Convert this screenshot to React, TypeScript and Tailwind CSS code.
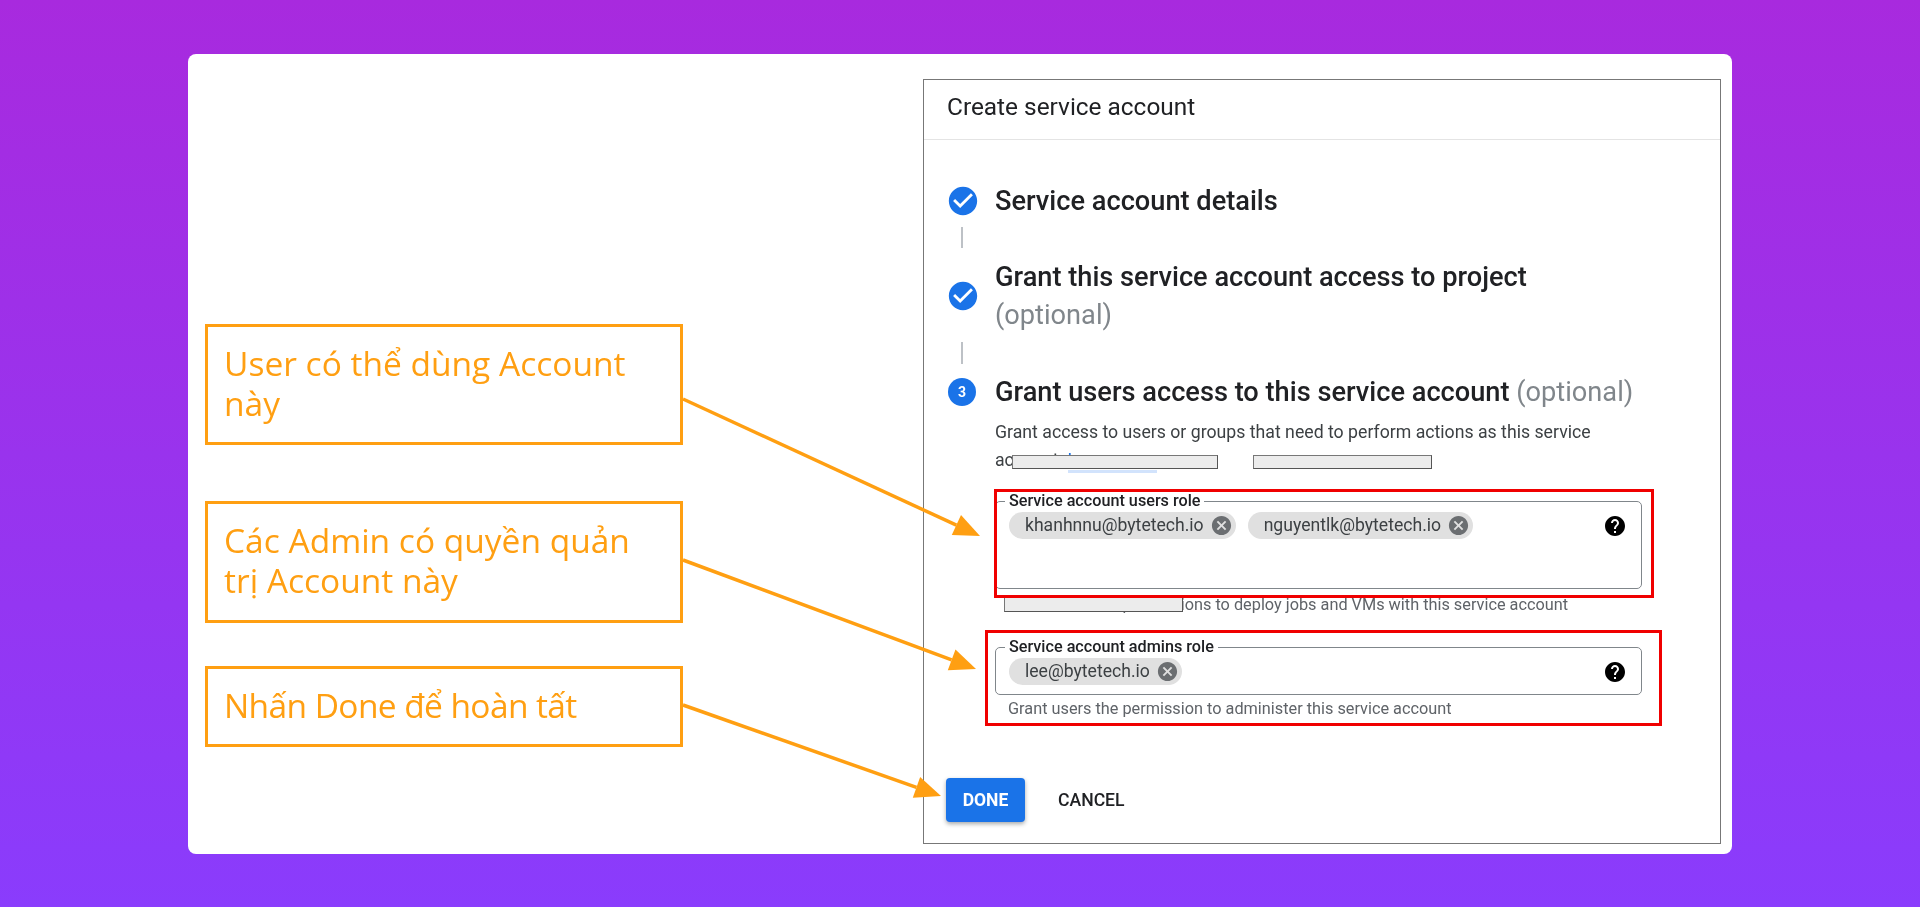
const MD_CHECK = "M12 2C6.48 2 2 6.48 2 12s4.48 10 10 10 10-4.48 10-10S17.52 2 12 2zm-2 15l-5-5 1.41-1.41L10 14.17l7.59-7.59L19 8l-9 9z";
const MD_CANCEL = "M12 2C6.47 2 2 6.47 2 12s4.47 10 10 10 10-4.47 10-10S17.53 2 12 2zm5 13.59L15.59 17 12 13.41 8.41 17 7 15.59 10.59 12 7 8.41 8.41 7 12 10.59 15.59 7 17 8.41 13.41 12 17 15.59z";
const MD_HELP = "M12 2C6.48 2 2 6.48 2 12s4.48 10 10 10 10-4.48 10-10S17.52 2 12 2zm1 17h-2v-2h2v2zm2.07-7.75l-.9.92C13.45 12.9 13 13.5 13 15h-2v-.5c0-1.1.45-2.1 1.17-2.83l1.24-1.26c.37-.36.59-.86.59-1.41 0-1.1-.9-2-2-2s-2 .9-2 2H8c0-2.21 1.79-4 4-4s4 1.79 4 4c0 .88-.36 1.68-.93 2.25z";

function Icon({ d, className }: { d: string; className: string }) {
  return (
    <svg viewBox="0 0 24 24" className={className} fill="currentColor">
      <path d={d} />
    </svg>
  );
}

function Callout({ lines, className }: { lines: string[]; className: string }) {
  return (
    <div className={`w-[478px] border-[3.5px] border-[#ff9f12] pl-[16px] font-['Open_Sans',sans-serif] text-[33.5px] leading-[40px] text-[#ff9f12] ${className}`}>
      {lines.map((line) => (
        <div key={line}>{line}</div>
      ))}
    </div>
  );
}

function Chip({ email }: { email: string }) {
  return (
    <div className="flex h-[27px] items-center rounded-full bg-[#e0e0e0] pl-[16px] pr-[3px] text-[17.6px] text-[#3c4043]">
      <span>{email}</span>
      <Icon d={MD_CANCEL} className="ml-[6px] h-[23px] w-[23px] text-[#6b6e71]" />
    </div>
  );
}

function RoleField({ label, height, emails }: { label: string; height: string; emails: string[] }) {
  return (
    <div className={`relative ml-[1px] w-[647px] rounded-[5px] border border-[#80868b] ${height}`}>
      <span className="absolute left-[9px] top-[-9px] bg-white px-[4px] text-[16.2px] leading-[16px] font-medium text-[#202124]">
        {label}
      </span>
      <div className="flex gap-[12px] pl-[13px] pt-[10px]">
        {emails.map((email) => (
          <Chip key={email} email={email} />
        ))}
      </div>
      <Icon d={MD_HELP} className="absolute right-[14px] top-[12px] h-[24px] w-[24px] text-black" />
    </div>
  );
}

function Redacted({ className }: { className: string }) {
  return <div className={`absolute border border-[#777] border-r-[#555] border-b-[#555] bg-[#ececec] ${className}`} />;
}

const ARROWS = [
  { x1: 683, y1: 399, x2: 980, y2: 536 },
  { x1: 683, y1: 560, x2: 976, y2: 669 },
  { x1: 683, y1: 705, x2: 941, y2: 796 },
];

export default function App() {
  return (
    <div className="relative h-[907px] overflow-hidden bg-[linear-gradient(180deg,#a82ade_0%,#8a3cfc_100%)] pl-[188px] pt-[54px]">
      <div className="flex h-[800px] w-[1544px] rounded-lg bg-white pt-[25px]">
        <div className="ml-[17px] flex w-[718px] flex-col pt-[245px] blur-[0.4px]">
          <Callout lines={["User có thể dùng Account", "này"]} className="h-[121px] pt-[16px]" />
          <Callout lines={["Các Admin có quyền quản", "trị Account này"]} className="mt-[56px] h-[122px] pt-[16px]" />
          <Callout lines={["Nhấn Done để hoàn tất"]} className="mt-[43px] h-[81px] pt-[16px] tracking-[-0.6px]" />
        </div>

        <div className="h-[765px] w-[798px] border-[1.5px] border-[#777] font-['Roboto',sans-serif] blur-[0.4px]">
          <div className="flex h-[60px] items-center border-b border-[#e4e4e4] pb-[4px] pl-[23px] text-[24.4px] text-[#202124]">
            Create service account
          </div>

          <div className="pl-[24px] pt-[46px]">
            <div className="flex h-[30px] items-center">
              <Icon d={MD_CHECK} className="ml-[-2px] h-[34px] w-[34px] text-[#1a73e8]" />
              <span className="ml-[15px] text-[27.2px] font-medium text-[#202124]">Service account details</span>
            </div>
            <div className="ml-[13px] mt-[11px] h-[21px] w-[1.5px] bg-[#bdc1c6]" />
            <div className="mt-[10px] flex items-center">
              <Icon d={MD_CHECK} className="ml-[-2px] h-[34px] w-[34px] text-[#1a73e8]" />
              <div className="ml-[15px] text-[27.2px] leading-[38px] font-medium text-[#202124]">
                <div>Grant this service account access to project</div>
                <div className="font-normal text-[#80868b]">(optional)</div>
              </div>
            </div>
            <div className="ml-[13px] mt-[8px] h-[22px] w-[1.5px] bg-[#bdc1c6]" />
            <div className="mt-[13px] flex h-[30px] items-center">
              <div className="flex h-[28px] w-[28px] items-center justify-center rounded-full bg-[#1a73e8] text-[14px] font-bold text-white">
                3
              </div>
              <span className="ml-[19px] text-[27.2px] font-medium text-[#202124]">
                Grant users access to this service account <span className="font-normal text-[#80868b]">(optional)</span>
              </span>
            </div>

            <div className="relative ml-[47px] mt-[11px] w-[620px] text-[17.7px] leading-[28px] text-[#3c4043]">
              <div>Grant access to users or groups that need to perform actions as this service</div>
              <div>
                account. <span className="border-b-[3px] border-[#d2e3fc] text-[#1a73e8]">Learn more</span>
              </div>
              <Redacted className="left-[17px] top-[37px] h-[14px] w-[206px]" />
              <Redacted className="left-[258px] top-[37px] h-[14px] w-[179px]" />
            </div>

            <div className="ml-[46px] mt-[27px] flex flex-col">
              <RoleField label="Service account users role" height="h-[88px]" emails={["khanhnnu@bytetech.io", "nguyentlk@bytetech.io"]} />
              <div className="relative mt-[8px] pl-[14px] text-[16.3px] leading-[16px] text-[#5f6368]">
                Grant users the permissions to deploy jobs and VMs with this service account
                <Redacted className="left-[10px] top-[-1px] h-[16px] w-[179px]" />
              </div>
              <div className="mt-[34px]">
                <RoleField label="Service account admins role" height="h-[48px]" emails={["lee@bytetech.io"]} />
              </div>
              <div className="mt-[6px] pl-[14px] text-[16.3px] leading-[16px] text-[#5f6368]">
                Grant users the permission to administer this service account
              </div>
            </div>

            <div className="mt-[61px] flex items-center">
              <div className="ml-[-2px] flex h-[44px] w-[79px] items-center justify-center rounded-[4px] bg-[#1a73e8] text-[17.5px] font-bold text-white shadow-[0_2px_4px_rgba(60,64,67,0.45)]">
                DONE
              </div>
              <div className="ml-[33px] text-[17.6px] font-medium text-[#202124]">CANCEL</div>
            </div>
          </div>
        </div>
      </div>

      <div className="absolute left-[994px] top-[489px] h-[109px] w-[660px] border-[3px] border-[#f00000]" />
      <div className="absolute left-[985px] top-[630px] h-[96px] w-[677px] border-[3px] border-[#f00000]" />

      <svg className="absolute left-0 top-0 h-[907px] w-[1920px]" viewBox="0 0 1920 907" fill="none">
        {ARROWS.map((a) => {
          const dx = a.x2 - a.x1;
          const dy = a.y2 - a.y1;
          const len = Math.hypot(dx, dy);
          const ux = dx / len;
          const uy = dy / len;
          const bx = a.x2 - ux * 26;
          const by = a.y2 - uy * 26;
          return (
            <g key={a.y1}>
              <line x1={a.x1} y1={a.y1} x2={bx} y2={by} stroke="#ff9f12" strokeWidth="3.5" />
              <polygon
                points={`${a.x2},${a.y2} ${bx - uy * 11},${by + ux * 11} ${bx + uy * 11},${by - ux * 11}`}
                fill="#ff9f12"
              />
            </g>
          );
        })}
      </svg>
    </div>
  );
}
